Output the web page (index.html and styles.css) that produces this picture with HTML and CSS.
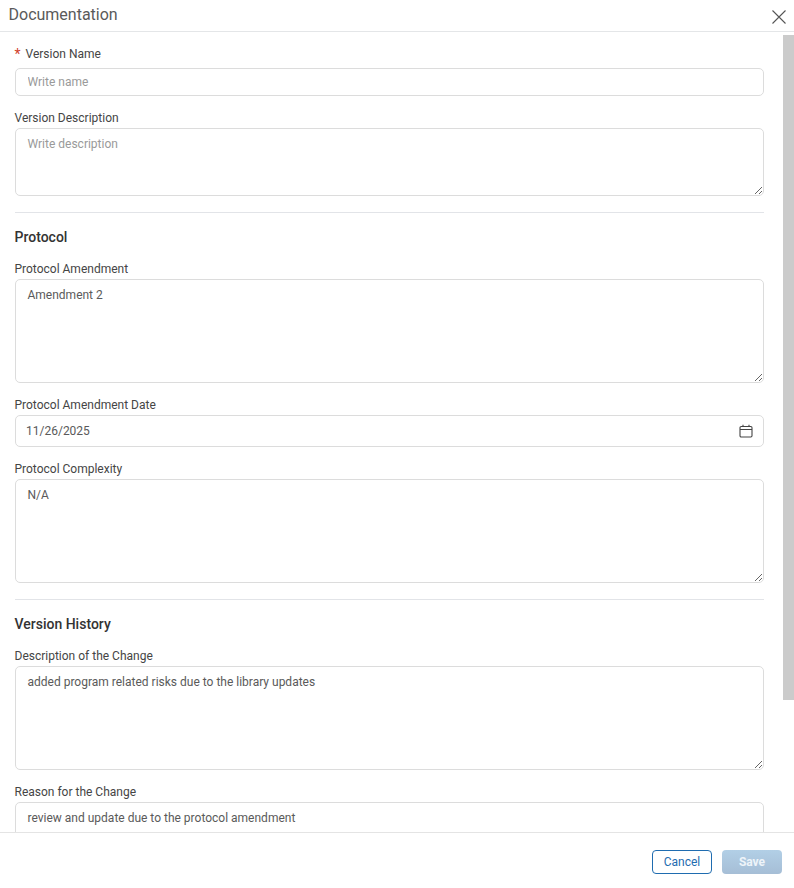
FILE: index.html
```html
<!DOCTYPE html>
<html lang="en">
<head>
    <meta charset="UTF-8">
    <meta name="viewport" content="width=device-width, initial-scale=1.0">
    <title>Documentation</title>
    <link rel="stylesheet" href="styles.css">
</head>
<body>
    <div class="dialog">
        <header class="header">
            <h1 class="title">Documentation</h1>
            <button type="button" class="close" aria-label="Close">
                <svg width="14" height="14" viewBox="0 0 14 14" fill="none" stroke="#555" stroke-width="1.1">
                    <path d="M0.5 0.5L13.5 13.5M13.5 0.5L0.5 13.5"/>
                </svg>
            </button>
        </header>

        <div class="body">
            <form class="form">
                <div class="field first">
                    <label class="label required" for="versionName"><span class="star">*</span>Version Name</label>
                    <input class="input" type="text" id="versionName" placeholder="Write name">
                </div>
                <div class="field">
                    <label class="label" for="versionDescription">Version Description</label>
                    <textarea class="input area short" id="versionDescription" placeholder="Write description"></textarea>
                </div>

                <hr class="divider">
                <h2 class="section">Protocol</h2>

                <div class="field">
                    <label class="label" for="amendment">Protocol Amendment</label>
                    <textarea class="input area" id="amendment">Amendment 2</textarea>
                </div>
                <div class="field">
                    <label class="label" for="amendmentDate">Protocol Amendment Date</label>
                    <div class="date">
                        <input class="input date-input" type="text" id="amendmentDate" value="11/26/2025">
                        <svg class="date-icon" width="14" height="14" viewBox="0 0 14 14" fill="none" stroke="#444" stroke-width="1.1">
                            <rect x="1" y="2.5" width="12" height="10.5" rx="1.2"/>
                            <path d="M1 5.5H13M4 0.8V3M10 0.8V3"/>
                        </svg>
                    </div>
                </div>
                <div class="field">
                    <label class="label" for="complexity">Protocol Complexity</label>
                    <textarea class="input area" id="complexity">N/A</textarea>
                </div>

                <hr class="divider">
                <h2 class="section">Version History</h2>

                <div class="field">
                    <label class="label" for="changeDescription">Description of the Change</label>
                    <textarea class="input area" id="changeDescription">added program related risks due to the library updates</textarea>
                </div>
                <div class="field">
                    <label class="label" for="changeReason">Reason for the Change</label>
                    <textarea class="input area" id="changeReason">review and update due to the protocol amendment</textarea>
                </div>
            </form>
            <div class="scroll-thumb"></div>
        </div>

        <footer class="footer">
            <button type="button" class="btn btn-cancel">Cancel</button>
            <button type="button" class="btn btn-save" disabled>Save</button>
        </footer>
    </div>
</body>
</html>
```

FILE: styles.css
```css
* {
    font-family: Roboto, "Liberation Sans", sans-serif;
    box-sizing: border-box;
    margin: 0;
    padding: 0;
}

html, body {
    height: 100%;
    background-color: #fff;
    overflow: hidden;
}

.dialog {
    display: flex;
    flex-direction: column;
    height: 100vh;
}

.header {
    display: flex;
    align-items: center;
    justify-content: space-between;
    flex: none;
    height: 32px;
    padding: 0 8px 2px 8.5px;
    border-bottom: 1px solid #e4e6e8;
}

.title {
    font-size: 16px;
    font-weight: 400;
    color: #5a5a5a;
}

.close {
    display: flex;
    border: 0;
    background: none;
    margin-top: 4px;
}

.body {
    position: relative;
    flex: 1;
    min-height: 0;
    overflow: hidden;
}

.form {
    padding: 0 30px 0 15px;
}

.field {
    display: flex;
    flex-direction: column;
    margin-bottom: 14px;
}

.field.first {
    padding-top: 14px;
}

.label {
    display: block;
    font-size: 12px;
    line-height: 16px;
    color: #454545;
    margin-bottom: 2px;
    margin-left: -0.5px;
}

.label.required {
    margin-bottom: 6px;
}

.star {
    color: #d0402b;
    font-size: 14px;
    margin-right: 5px;
    vertical-align: -1px;
}

.input {
    display: block;
    width: 100%;
    height: 28px;
    padding: 0 11.5px;
    border: 1px solid #dcdcdc;
    border-radius: 5px;
    outline: none;
    font-size: 12px;
    color: #5a5a5a;
    background-color: #fff;
}

.input::placeholder {
    color: #9a9a9a;
    opacity: 1;
}

.area {
    height: 104px;
    padding: 8px 11.5px;
    line-height: 14px;
    resize: vertical;
}

.area.short {
    height: 68px;
}

.date {
    position: relative;
}

.date-input {
    height: 32px;
    padding: 0 10px;
}

.date-icon {
    position: absolute;
    top: 9px;
    right: 11px;
}

.divider {
    border: 0;
    border-top: 1px solid #e2e4e8;
    margin-top: 16px;
}

.section {
    font-size: 14px;
    font-weight: 500;
    line-height: 18px;
    color: #333;
    margin-top: 15px;
    margin-bottom: 15px;
    margin-left: -0.5px;
}

.scroll-thumb {
    position: absolute;
    top: 3px;
    right: 0;
    width: 11px;
    height: 665px;
    background-color: #cbcbcb;
}

.footer {
    display: flex;
    justify-content: flex-end;
    align-items: flex-start;
    column-gap: 10px;
    flex: none;
    height: 56px;
    padding: 17px 12px 0 0;
    border-top: 1px solid #e4e4e4;
    background-color: #fff;
}

.btn {
    width: 60px;
    height: 24px;
    border-radius: 4px;
    font-size: 12px;
}

.btn-cancel {
    color: #1f6cb0;
    background-color: #fff;
    border: 1px solid #1f6cb0;
}

.btn-save {
    color: #eef4f9;
    font-weight: 700;
    border: 0;
    background: linear-gradient(#b2cfe6, #a6bed6);
}
```
